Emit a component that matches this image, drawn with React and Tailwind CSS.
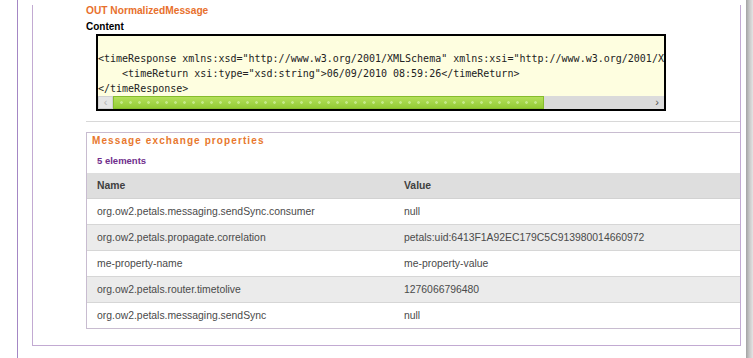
const PROPS = [
  { name: 'org.ow2.petals.messaging.sendSync.consumer', value: 'null' },
  { name: 'org.ow2.petals.propagate.correlation', value: 'petals:uid:6413F1A92EC179C5C913980014660972' },
  { name: 'me-property-name', value: 'me-property-value' },
  { name: 'org.ow2.petals.router.timetolive', value: '1276066796480' },
  { name: 'org.ow2.petals.messaging.sendSync', value: 'null' },
];

const XML_LINES = [
  '<timeResponse xmlns:xsd="http://www.w3.org/2001/XMLSchema" xmlns:xsi="http://www.w3.org/2001/XM',
  '    <timeReturn xsi:type="xsd:string">06/09/2010 08:59:26</timeReturn>',
  '</timeResponse>',
];

function Scrollbar() {
  return (
    <div className="flex h-[13px]">
      {/* left arrow */}
      <div className="w-[15px] bg-[#e4e4e4] border border-[#d0d0d0] flex items-center justify-center text-[11px] leading-none text-[#b0b0b0]">
        ‹
      </div>
      {/* thumb */}
      <div className="w-[431px] relative bg-gradient-to-b from-[#b4e05a] to-[#94cc34] border border-[#86bd2c]">
        <div className="absolute inset-0 bg-[radial-gradient(circle,#c4ea86_1.1px,transparent_1.6px)] bg-[length:9px_11px] bg-[position:3px_0px]" />
      </div>
      {/* track */}
      <div className="flex-1 bg-[#dadada]" />
      {/* right arrow */}
      <div className="w-[14px] bg-[#dcdcdc] flex items-center justify-center text-[11px] leading-none text-[#505050]">
        ›
      </div>
    </div>
  );
}

export default function App() {
  return (
    <div className="w-[753px] h-[358px] overflow-hidden bg-white flex font-['Liberation_Sans',Arial,sans-serif]">
      {/* left guide line + main box */}
      <div className="pl-[17px] flex">
        <div className="border-l border-[#a487c4] pl-[14px] h-[358px]">
          <div className="w-[709px] border-l border-r border-b border-[#c2aad2] pl-[53px] pb-[16px]">
            <div className="mt-[5px] text-[10.2px] leading-[12px] font-bold text-[#e8702c]">
              OUT NormalizedMessage
            </div>
            <div className="mt-[4px] text-[10px] leading-[12px] font-bold text-black">
              Content
            </div>

            {/* code box */}
            <div className="mt-[1px] ml-[10px] w-[570px] border-2 border-black bg-[#fefee0]">
              <div className="overflow-hidden h-[60px] pt-[15px] text-[10px] leading-[15px] text-[#222] font-['DejaVu_Sans_Mono',monospace]">
                {XML_LINES.map((l) => (
                  <div key={l} className="whitespace-pre">{l}</div>
                ))}
              </div>
              <Scrollbar />
            </div>

            <div className="mt-[10px] h-px bg-[#d8d8d8]" />

            {/* properties panel */}
            <div className="mt-[10px] border-l border-t border-b border-[#c8bcd0] pt-[2px]">
              <div className="pl-[5px] text-[10px] leading-[12px] font-bold tracking-[1.1px] text-[#e8782e]">
                Message exchange properties
              </div>
              <div className="mt-[8px] pl-[10px] text-[9.5px] leading-[12px] font-bold text-[#6f2e8c]">
                5 elements
              </div>
              <div className="mt-[6px] text-[10.4px] text-[#4a4a4a]">
                <div className="grid grid-cols-[307px_1fr] h-[26px] items-center bg-[#dedede] border-b border-[#d2d2d2] font-bold text-[#404040]">
                  <span className="pl-[10px]">Name</span>
                  <span className="pl-[10px]">Value</span>
                </div>
                {PROPS.map((p, i) => (
                  <div
                    key={p.name}
                    className={
                      'grid grid-cols-[307px_1fr] items-center ' +
                      (i % 2 === 1 ? 'bg-[#ebebeb] ' : 'bg-white ') +
                      (i === PROPS.length - 1 ? 'h-[25px]' : 'h-[26px] border-b border-[#d6d6d6]')
                    }
                  >
                    <span className="pl-[10px]">{p.name}</span>
                    <span className="pl-[10px]">{p.value}</span>
                  </div>
                ))}
              </div>
            </div>
          </div>
        </div>
      </div>

      <div className="w-[5px]" />
      {/* right shadow strip */}
      <div className="w-[7px] h-full bg-gradient-to-r from-[#a4a4a4] via-[#c8c8c8] to-[#e4e4e4]" />
    </div>
  );
}
